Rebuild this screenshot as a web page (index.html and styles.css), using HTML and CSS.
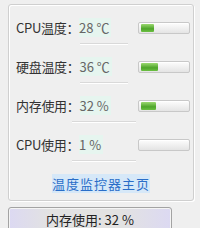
FILE: index.html
```html
<!DOCTYPE html>
<html>
<head>
    <meta charset="UTF-8">
    <title>温度监控器</title>
    <link rel="stylesheet" href="styles.css">
</head>
<body>
    <div class="panel">
        <div class="row">
            <div class="line">
                <span class="label">CPU温度：<span class="value">28 ℃</span></span>
                <div class="bar"><div class="fill" style="width: 28%"></div></div>
            </div>
            <div class="sep sep-short"></div>
        </div>
        <div class="row">
            <div class="line">
                <span class="label">硬盘温度：<span class="value">36 ℃</span></span>
                <div class="bar"><div class="fill" style="width: 36%"></div></div>
            </div>
            <div class="sep sep-short"></div>
        </div>
        <div class="row">
            <div class="line">
                <span class="label">内存使用：<span class="value">32 %</span></span>
                <div class="bar"><div class="fill" style="width: 32%"></div></div>
            </div>
            <div class="sep sep-long"></div>
        </div>
        <div class="row">
            <div class="line">
                <span class="label">CPU使用：<span class="value">1 %</span></span>
                <div class="bar"><div class="fill" style="width: 1%"></div></div>
            </div>
            <div class="sep sep-long"></div>
        </div>
        <div class="link-row">
            <a class="home-link" href="#">温度监控器主页</a>
        </div>
    </div>
    <button class="status-btn">内存使用: 32 %</button>
</body>
</html>
```

FILE: styles.css
```css
body {
    margin: 0;
    width: 200px;
    height: 228px;
    overflow: hidden;
    background: #efefef;
    font-family: "Noto Sans CJK SC", "DejaVu Sans", sans-serif;
    font-size: 13px;
    color: #333;
}

.panel {
    margin: 4px 0 0 8px;
    width: 184px;
    height: 191px;
    border: 1px solid #cfcfcf;
    border-radius: 3px;
    box-shadow: inset 1px 1px 0 #fff, 1px 1px 0 #fff;
    padding-top: 4px;
    box-sizing: content-box;
}

.row {
    height: 39px;
    padding-top: 11px;
    box-sizing: border-box;
}

.line {
    display: flex;
    align-items: center;
    justify-content: space-between;
    height: 16px;
    padding: 0 3px 0 7px;
}

.label {
    line-height: 16px;
    white-space: nowrap;
    letter-spacing: -0.3px;
}

.value {
    color: #666;
    background: #e6f5ef;
    padding-right: 2px;
    letter-spacing: 0;
}

.bar {
    width: 46px;
    height: 8px;
    border: 1px solid #c8c8c8;
    border-radius: 2px;
    background: linear-gradient(#fdfdfd, #e4e4e4);
    box-shadow: inset 0 1px 0 #fff;
    padding: 1px 2px;
}

.fill {
    height: 100%;
    border-radius: 1px;
    background: linear-gradient(#9bd870, #4ea52a 60%, #6cc043);
}

.sep {
    height: 1px;
    border-bottom: 1px solid #fff;
    background: #d9d9d9;
    margin-top: 7px;
}

.sep-short {
    width: 48px;
    margin-left: 71px;
}

.sep-long {
    width: 64px;
    margin-left: 63px;
}

.link-row {
    text-align: center;
    padding-top: 9px;
}

.home-link {
    color: #2a6ec8;
    background: #d6e8f8;
    text-decoration: none;
    line-height: 16px;
    letter-spacing: 1px;
}

.status-btn {
    display: block;
    margin: 6px 0 0 8px;
    width: 164px;
    height: 24px;
    border: 1px solid #a3a3a3;
    border-radius: 3px;
    background: linear-gradient(90deg, #dcd9f2 0%, #e2e2e2 25%, #e2e2e2 70%, #dcd9f2 100%);
    box-shadow: inset 0 0 0 1px #f4f4f4;
    font-family: inherit;
    font-size: 13px;
    color: #222;
    padding: 0;
}
```
